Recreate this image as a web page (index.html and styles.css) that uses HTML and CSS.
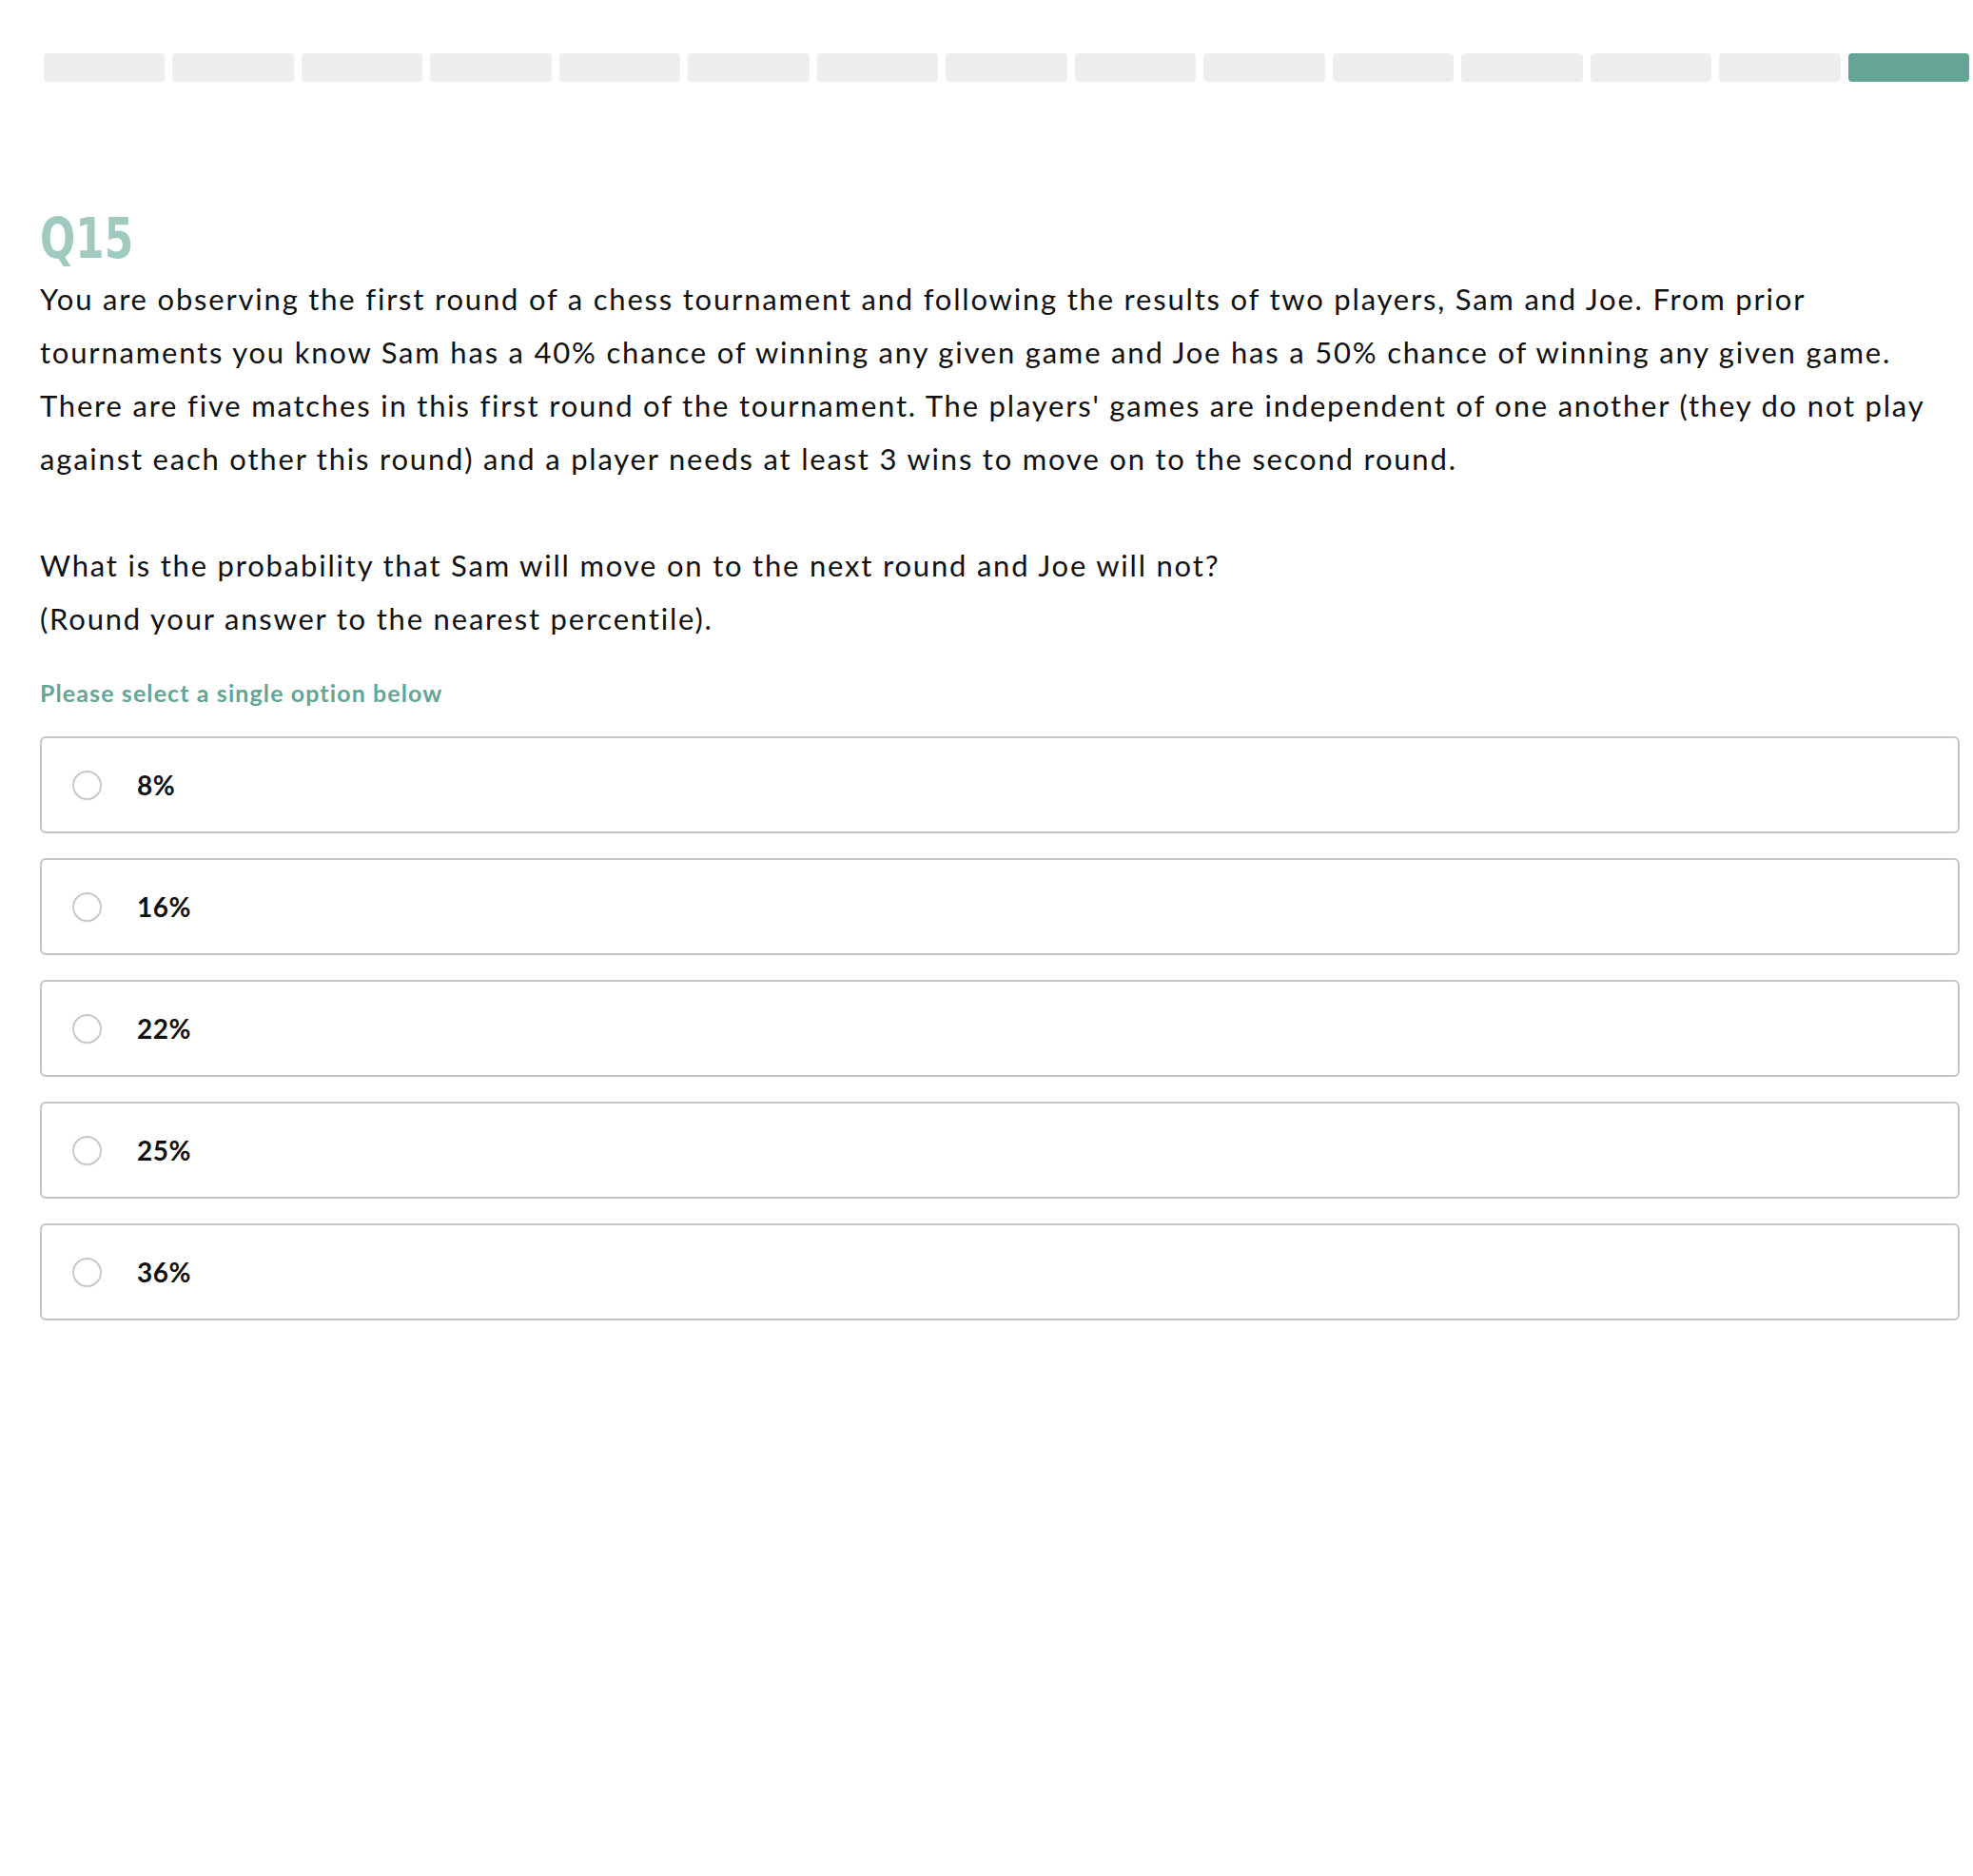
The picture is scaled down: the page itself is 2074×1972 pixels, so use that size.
FILE: index.html
```html
<!DOCTYPE html>
<html lang="en">
<head>
<meta charset="utf-8">
<title>Q15</title>
<link rel="stylesheet" href="styles.css">
</head>
<body>
<div class="progress">
  <span class="seg"></span><span class="seg"></span><span class="seg"></span><span class="seg"></span><span class="seg"></span>
  <span class="seg"></span><span class="seg"></span><span class="seg"></span><span class="seg"></span><span class="seg"></span>
  <span class="seg"></span><span class="seg"></span><span class="seg"></span><span class="seg"></span><span class="seg seg-active"></span>
</div>
<main class="content">
  <h1 class="qnum">Q15</h1>
  <p class="stem">You are observing the first round of a chess tournament and following the results of two players, Sam and Joe. From prior tournaments you know Sam has a 40% chance of winning any given game and Joe has a 50% chance of winning any given game. There are five matches in this first round of the tournament. The players' games are independent of one another (they do not play against each other this round) and a player needs at least 3 wins to move on to the second round.</p>
  <p class="stem">What is the probability that Sam will move on to the next round and Joe will not?<br>(Round your answer to the nearest percentile).</p>
  <div class="hint">Please select a single option below</div>
  <div class="options">
    <label class="option"><span class="radio"></span><span class="opt-text">8%</span></label>
    <label class="option"><span class="radio"></span><span class="opt-text">16%</span></label>
    <label class="option"><span class="radio"></span><span class="opt-text">22%</span></label>
    <label class="option"><span class="radio"></span><span class="opt-text">25%</span></label>
    <label class="option"><span class="radio"></span><span class="opt-text">36%</span></label>
  </div>
</main>
</body>
</html>
```
FILE: styles.css
```css
html, body {
  margin: 0;
  padding: 0;
  background: #ffffff;
}
body {
  font-family: "Lato", "Open Sans", sans-serif;
  color: #111111;
}
.progress {
  display: flex;
  gap: 8px;
  height: 30px;
  margin: 56px 4px 0 46px;
}
.seg {
  flex: 1;
  background: #eeeeee;
  border-radius: 4px;
}
.seg-active {
  background: #64a596;
}
.content {
  padding: 0 14px 0 42px;
}
.qnum {
  margin: 130px 0 0 0;
  font-family: "DejaVu Sans Condensed", "DejaVu Sans", sans-serif;
  font-stretch: condensed;
  font-weight: 700;
  font-size: 58px;
  line-height: 70px;
  color: #a0cac0;
  transform: scaleX(0.84);
  transform-origin: left center;
}
.stem {
  margin: 0 0 56px 0;
  font-size: 31px;
  line-height: 56px;
  letter-spacing: 1.8px;
}
.stem + .stem {
  margin-bottom: 0;
}
.hint {
  margin-top: 32px;
  font-size: 25px;
  line-height: 36px;
  font-weight: 700;
  color: #64a596;
  letter-spacing: 1.1px;
}
.options {
  margin-top: 28px;
  display: flex;
  flex-direction: column;
  gap: 26px;
}
.option {
  display: flex;
  align-items: center;
  height: 98px;
  border: 2px solid #c6c6c6;
  border-radius: 6px;
  padding-left: 32px;
}
.radio {
  width: 27px;
  height: 27px;
  border: 2px solid #c8c8c8;
  border-radius: 50%;
  flex: none;
}
.opt-text {
  margin-left: 37px;
  font-size: 28px;
  font-weight: 700;
  color: #111111;
  letter-spacing: 0.5px;
}
```
